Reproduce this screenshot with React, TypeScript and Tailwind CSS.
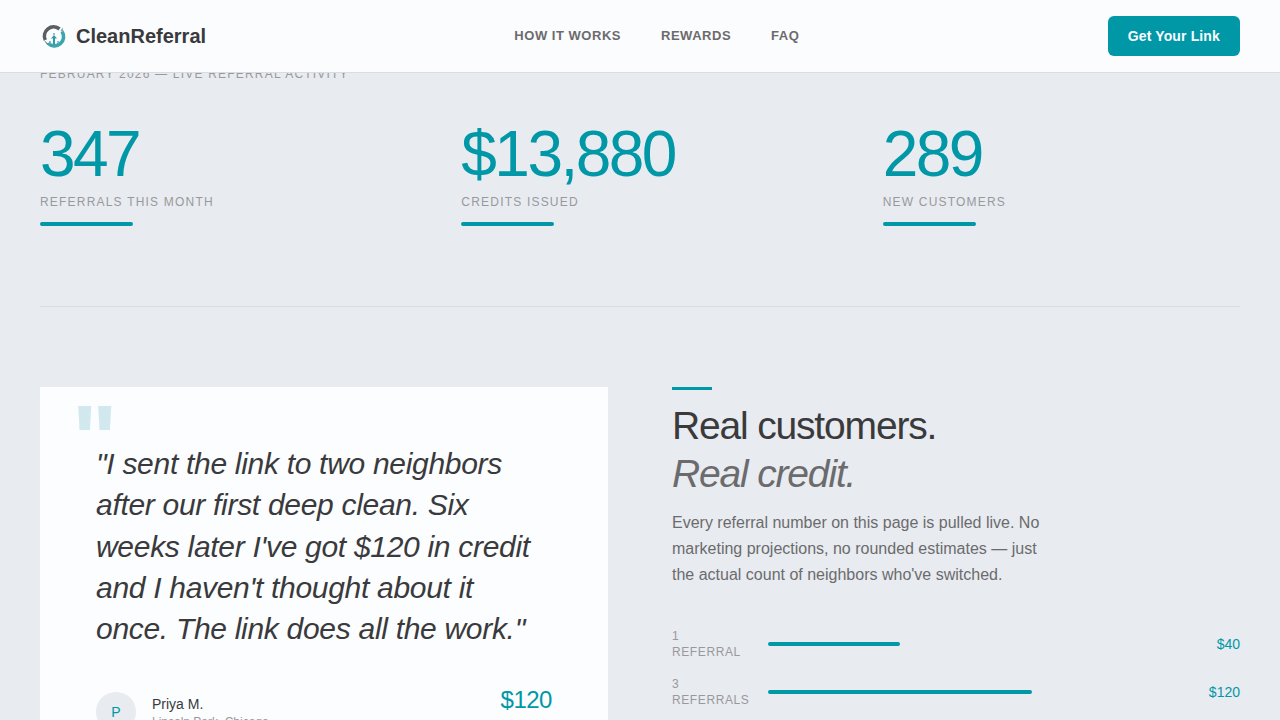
import React from "react";

const navLinks = [
  { label: "How it works", href: "#how-it-works" },
  { label: "Rewards", href: "#rewards" },
  { label: "FAQ", href: "#faq" },
];

const stats = [
  { value: "347", label: "Referrals this month" },
  { value: "$13,880", label: "Credits issued" },
  { value: "289", label: "New customers" },
];

const tiers = [
  { count: 1, unit: "Referral", amount: "$40", percent: 33.33 },
  { count: 3, unit: "Referrals", amount: "$120", percent: 66.67 },
];

function Logo() {
  return (
    <svg viewBox="0 0 28 28" className="h-7 w-7" fill="none" aria-hidden="true">
      <path
        d="M5.300 18A9.200 9.200 0 0 1 19.500 7"
        stroke="#5b5e62"
        strokeWidth="3.600"
      />
      <path
        d="M22 9.500A9.200 9.200 0 0 1 8 21.300"
        stroke="#3aa5ae"
        strokeWidth="3.600"
      />
      <path d="M22.500 5.500l1 5-3-1.500z" fill="#7fa9b0" />
      <path d="M4 17c1 2.500 3 4 5 4.500l-.5 1.700C6 22 4.500 20 4 17z" fill="#55959d" />
      <path d="M14 22V14.500" stroke="#2b9ca6" strokeWidth="2" />
      <path d="M11 16.500l3-3.500 3 3.500z" fill="#2b9ca6" />
      <circle cx="14" cy="12" r="1" fill="#6bb4bb" />
      <path
        d="M10 19v3M18 19v3"
        stroke="#5fb0b8"
        strokeWidth="1.500"
      />
    </svg>
  );
}

function Navbar() {
  return (
    <header className="fixed inset-x-0 top-0 z-10 border-b border-[#d9dce0] bg-[#fbfcfe]">
      <div className="flex items-center justify-between px-10 py-4">
        <a href="#top" className="flex items-center gap-2">
          <Logo />
          <span className="text-xl font-bold text-[#3a3a3c]">CleanReferral</span>
        </a>
        <nav className="flex gap-10">
          {navLinks.map((link) => (
            <a
              key={link.href}
              href={link.href}
              className="text-[13px] font-bold tracking-[0.04em] text-[#6b6b6d] uppercase"
            >
              {link.label}
            </a>
          ))}
        </nav>
        <button className="h-10 rounded-md bg-[#0097a7] px-5 text-sm font-bold tracking-[0.01em] text-[#f9fcfe]">
          Get Your Link
        </button>
      </div>
    </header>
  );
}

function Stats() {
  return (
    <section className="border-b border-[#d9dce0] pb-20">
      <p className="text-xs tracking-[0.1em] text-[#98999c] uppercase">
        February 2026 — Live referral activity
      </p>
      <div className="mt-10 grid grid-cols-3 gap-16">
        {stats.map((stat) => (
          <div key={stat.label}>
            <div className="text-[64px] leading-none tracking-[-0.04em] text-[#0097a7]">
              {stat.value}
            </div>
            <div className="mt-2 text-xs tracking-[0.1em] text-[#98999c] uppercase">
              {stat.label}
            </div>
            <div className="mt-3 h-1 w-[26%] rounded-full bg-[#0097a7]" />
          </div>
        ))}
      </div>
    </section>
  );
}

function Testimonial() {
  return (
    <figure className="relative bg-[#fbfdfe] p-14">
      <span
        className="absolute top-1 left-8 text-[96px] leading-none font-bold text-[#d0e8ee]"
        aria-hidden="true"
      >
        "
      </span>
      <blockquote className="relative text-3xl leading-snug tracking-[-0.01em] text-[#3a3a3c] italic">
        "I sent the link to two neighbors after our first deep clean. Six weeks
        later I've got $120 in credit and I haven't thought about it once. The
        link does all the work."
      </blockquote>
      <figcaption className="mt-8 flex items-start justify-between">
        <div className="flex items-center gap-4 pt-[11px]">
          <div className="flex h-10 w-10 items-center justify-center rounded-full bg-[#e8ebef] text-sm text-[#0097a7]">
            P
          </div>
          <div>
            <div className="text-sm text-[#3a3a3c]">Priya M.</div>
            <div className="text-xs text-[#98999c]">Lincoln Park, Chicago</div>
          </div>
        </div>
        <div className="pt-1 text-2xl leading-[30px] tracking-[-0.02em] text-[#0097a7]">
          $120
        </div>
      </figcaption>
    </figure>
  );
}

function Rewards() {
  return (
    <div>
      <div className="h-[3px] w-10 bg-[#0097a7]" />
      <h2 className="mt-3 text-[39px] leading-12 tracking-[-0.03em] text-[#3a3a3c]">
        Real customers.
        <br />
        <em className="text-[#6b6b6d]">Real credit.</em>
      </h2>
      <p className="mt-3 max-w-96 leading-relaxed text-[#6b6b6d]">
        Every referral number on this page is pulled live. No marketing
        projections, no rounded estimates — just the actual count of neighbors
        who've switched.
      </p>
      <div className="mt-10 flex flex-col gap-4">
        {tiers.map((tier) => (
          <div key={tier.count} className="flex items-center gap-4">
            <div className="w-20 text-xs tracking-[0.05em] text-[#98999c] uppercase">
              {tier.count}
              <br />
              {tier.unit}
            </div>
            <div className="flex-1">
              <div
                className="h-1 rounded-full bg-[#0097a7]"
                style={{ width: `${tier.percent}%` }}
              />
            </div>
            <div className="w-15 text-right text-sm text-[#0097a7]">
              {tier.amount}
            </div>
          </div>
        ))}
      </div>
    </div>
  );
}

function App() {
  return (
    <div
      id="top"
      className="min-h-screen bg-[#e8ebf0] font-['Liberation_Sans',Arial,sans-serif]"
    >
      <Navbar />
      <main className="px-10 pt-[66px]">
        <Stats />
        <section className="grid grid-cols-2 gap-16 py-20">
          <Testimonial />
          <Rewards />
        </section>
      </main>
    </div>
  );
}

export default App;
